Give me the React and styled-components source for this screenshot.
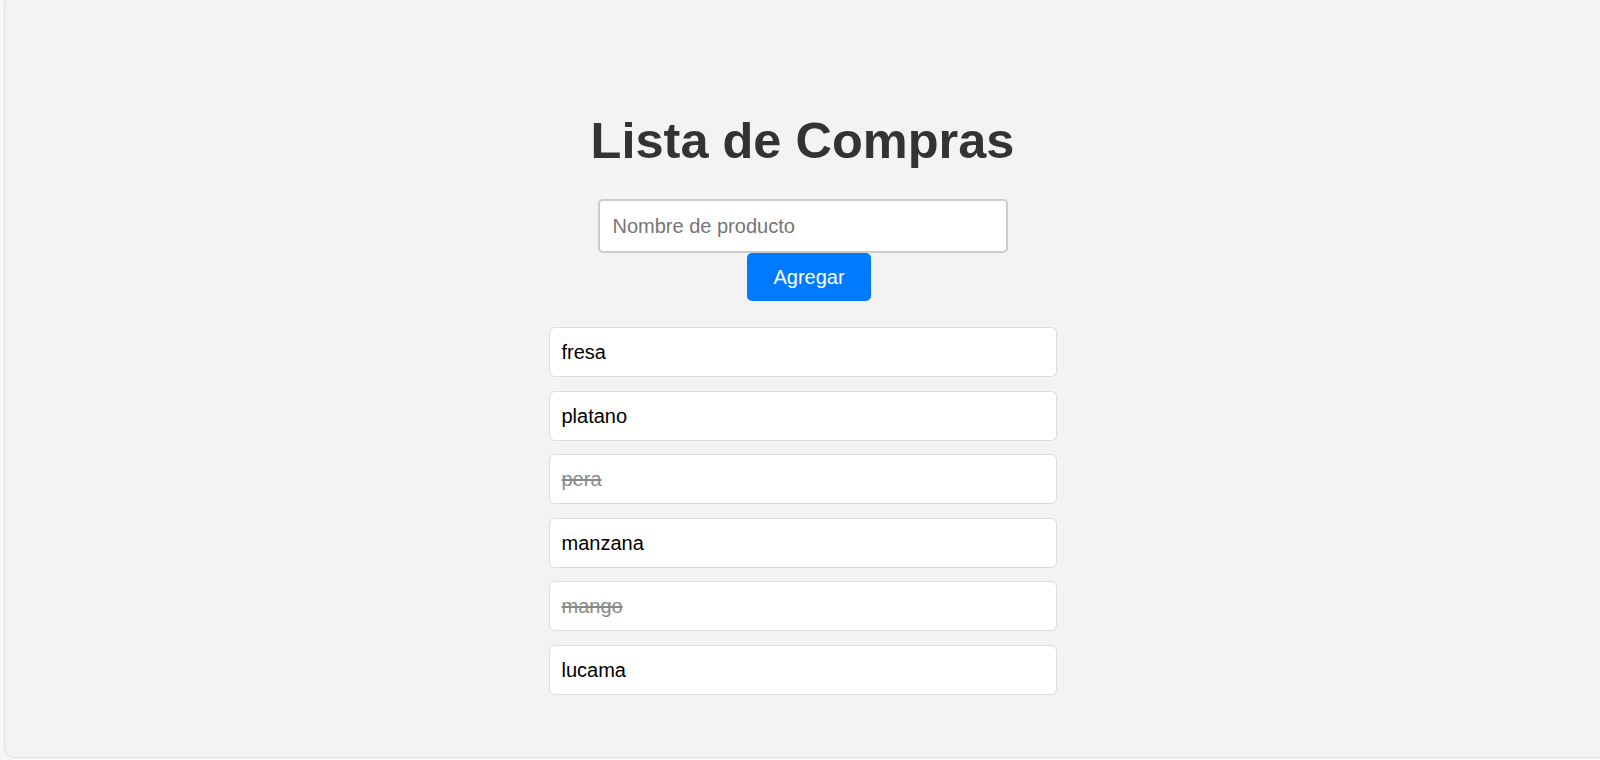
import React, { useState } from "react";
import styled, { createGlobalStyle } from "styled-components";

const GlobalStyle = createGlobalStyle`
  html, body {
    margin: 0;
    padding: 0;
    background: #f7f7f7;
    overflow: hidden;
  }
  body {
    font-family: "Liberation Sans", Arial, sans-serif;
  }
`;

const Frame = styled.div`
  box-sizing: border-box;
  margin: -6px 0 0 4px;
  width: 1610px;
  height: 764px;
  border: 1px solid #e2e2e2;
  border-radius: 10px;
  background: #f3f3f3;
`;

const Content = styled.main`
  width: 1595px;
  display: flex;
  flex-direction: column;
  align-items: center;
  padding-top: 117px;
`;

const Title = styled.h1`
  margin: 0 0 30px;
  font-size: 50.5px;
  line-height: 57px;
  font-weight: 700;
  color: #333;
`;

const Form = styled.form`
  width: 508px;
  display: flex;
  flex-wrap: wrap;
  justify-content: center;
  margin: 0 0 26px;
`;

const Input = styled.input`
  box-sizing: border-box;
  width: 410px;
  height: 54px;
  padding: 12px 13px;
  border: 2px solid #cbcbcb;
  border-radius: 5px;
  background: #fff;
  font-family: inherit;
  font-size: 20px;
  color: #222;
  outline: none;

  &::placeholder {
    color: #757575;
  }
`;

const Button = styled.button`
  box-sizing: border-box;
  margin-left: 13px;
  width: 124px;
  height: 48px;
  border: none;
  border-radius: 5px;
  background: #007bff;
  color: #fff;
  font-family: inherit;
  font-size: 20px;
  cursor: pointer;
`;

const List = styled.ul`
  list-style: none;
  margin: 0;
  padding: 0;
  width: 508px;
  display: flex;
  flex-direction: column;
  gap: 13.6px;
`;

const Item = styled.li`
  box-sizing: border-box;
  height: 50px;
  padding: 12px 12px;
  border: 1px solid #dcdcdc;
  border-radius: 6px;
  background: #fff;
  font-size: 20px;
  line-height: 24px;
  color: ${(p) => (p.done ? "#8a8a8a" : "#000")};
  text-decoration: ${(p) => (p.done ? "line-through" : "none")};
  cursor: pointer;
`;

const initial = [
  { name: "fresa", done: false },
  { name: "platano", done: false },
  { name: "pera", done: true },
  { name: "manzana", done: false },
  { name: "mango", done: true },
  { name: "lucama", done: false },
];

export default function App() {
  const [items, setItems] = useState(initial);
  const [text, setText] = useState("");

  const add = (e) => {
    e.preventDefault();
    if (!text.trim()) return;
    setItems([...items, { name: text.trim(), done: false }]);
    setText("");
  };

  const toggle = (i) =>
    setItems(items.map((it, j) => (j === i ? { ...it, done: !it.done } : it)));

  return (
    <>
      <GlobalStyle />
      <Frame>
        <Content>
          <Title>Lista de Compras</Title>
          <Form onSubmit={add}>
            <Input
              placeholder="Nombre de producto"
              value={text}
              onChange={(e) => setText(e.target.value)}
            />
            <Button type="submit">Agregar</Button>
          </Form>
          <List>
            {items.map((it, i) => (
              <Item key={`item__${i}`} done={it.done} onClick={() => toggle(i)}>
                {it.name}
              </Item>
            ))}
          </List>
        </Content>
      </Frame>
    </>
  );
}
